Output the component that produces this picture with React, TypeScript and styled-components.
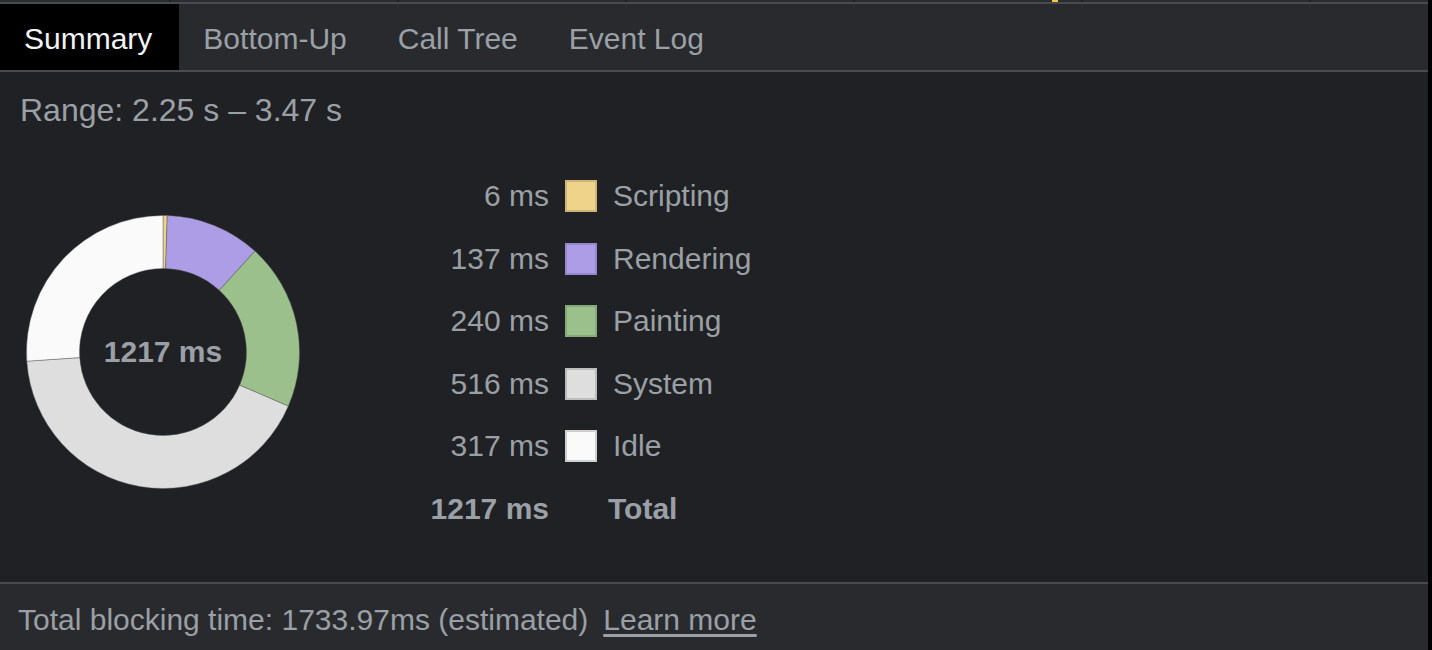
import React from "react"
import styled, { createGlobalStyle } from "styled-components"

const GlobalStyle = createGlobalStyle`
    html, body {
        margin: 0;
        padding: 0;
        background: #000;
    }
    body {
        font-family: "Liberation Sans", Arial, Helvetica, sans-serif;
    }
`

const Shell = styled.div`
    display: flex;
    width: 1432px;
    height: 650px;
    overflow: hidden;
    background: #000;
`

const Panel = styled.div`
    flex: 1;
    display: flex;
    flex-direction: column;
    background: #202124;
`

const Rail = styled.div`
    width: 4px;
    background: #000;
`

const Overview = styled.div`
    position: relative;
    height: 2px;
    background: repeating-linear-gradient(
        to right,
        #2b2c30 0px,
        #2b2c30 169px,
        #1d1e21 169px,
        #1d1e21 171px,
        #2b2c30 171px,
        #2b2c30 228px
    );
    border-bottom: 2px solid #4a4b4f;
`

const Marker = styled.span`
    position: absolute;
    left: 1052px;
    top: 0;
    width: 6px;
    height: 2px;
    background: #f7c54a;
`

const TabBar = styled.div`
    display: flex;
    height: 66px;
    background: #292a2d;
    border-bottom: 2px solid #4a4b4f;
`

const Tab = styled.div<{ $active?: boolean }>`
    display: flex;
    align-items: center;
    padding: 3px 27px 0 24px;
    font-size: 30px;
    color: ${p => p.$active ? "#f1f3f4" : "#9aa0a6"};
    background: ${p => p.$active ? "#000" : "transparent"};
`

const Content = styled.div`
    flex: 1;
    padding: 22px 20px 0 20px;
    border-bottom: 2px solid #4a4b4f;
`

const Range = styled.div`
    font-size: 32px;
    line-height: 32px;
    color: #9aa0a6;
`

const ChartRow = styled.div`
    display: flex;
    align-items: center;
    margin-top: 38px;
`

const DonutBox = styled.div`
    position: relative;
    width: 274px;
    height: 274px;
    margin-left: 6px;
    flex-shrink: 0;
`

const DonutLabel = styled.div`
    position: absolute;
    inset: 0;
    display: flex;
    align-items: center;
    justify-content: center;
    font-size: 30px;
    font-weight: bold;
    color: #9aa0a6;
`

const Legend = styled.div`
    display: grid;
    grid-template-columns: 140px 32px auto;
    grid-auto-rows: 62.5px;
    column-gap: 16px;
    align-items: center;
    margin: 1px 0 0 109px;
    font-size: 30px;
    color: #9aa0a6;
`

const Value = styled.div<{ $bold?: boolean }>`
    text-align: right;
    white-space: nowrap;
    font-weight: ${p => p.$bold ? "bold" : "normal"};
`

const Swatch = styled.div<{ $fill: string; $edge: string }>`
    width: 32px;
    height: 32px;
    box-sizing: border-box;
    background: ${p => p.$fill};
    border: 2px solid ${p => p.$edge};
`

const Label = styled.div<{ $bold?: boolean; $shift?: number }>`
    white-space: nowrap;
    font-weight: ${p => p.$bold ? "bold" : "normal"};
    margin-left: ${p => p.$shift ?? 0}px;
`

const Footer = styled.div`
    display: flex;
    align-items: center;
    gap: 15px;
    height: 66px;
    padding: 6px 0 0 18px;
    box-sizing: border-box;
    background: #292a2d;
    font-size: 30px;
    color: #9aa0a6;
`

const LearnMore = styled.a`
    color: #9aa0a6;
    text-decoration: underline;
    text-underline-offset: 4px;
    cursor: pointer;
`

interface Category {
    name: string,
    ms: number,
    fill: string,
    edge: string
}

const categories: Category[] = [
    { name: "Scripting", ms: 6, fill: "#efd38a", edge: "#cdb478" },
    { name: "Rendering", ms: 137, fill: "#ac9de6", edge: "#9487cc" },
    { name: "Painting", ms: 240, fill: "#9bc08c", edge: "#85a978" },
    { name: "System", ms: 516, fill: "#dedede", edge: "#bcbcbc" },
    { name: "Idle", ms: 317, fill: "#fafafa", edge: "#cfcfcf" },
]

const total = 1217

const point = (cx: number, cy: number, r: number, deg: number) => {
    const a = (deg - 90) * Math.PI / 180
    return [cx + r * Math.cos(a), cy + r * Math.sin(a)]
}

const arcPath = (start: number, end: number) => {
    const cx = 137, cy = 137, R = 136.5, r = 83.5
    const large = end - start > 180 ? 1 : 0
    const [x1, y1] = point(cx, cy, R, start)
    const [x2, y2] = point(cx, cy, R, end)
    const [x3, y3] = point(cx, cy, r, end)
    const [x4, y4] = point(cx, cy, r, start)
    return `M${x1} ${y1} A${R} ${R} 0 ${large} 1 ${x2} ${y2} L${x3} ${y3} A${r} ${r} 0 ${large} 0 ${x4} ${y4} Z`
}

const Donut: React.FC = () => {
    const sum = categories.reduce((s, c) => s + c.ms, 0)
    let angle = 0
    return (
        <DonutBox>
            <svg width="274" height="274" viewBox="0 0 274 274">
                {categories.map(c => {
                    const start = angle
                    const end = angle + c.ms / sum * 360
                    angle = end
                    return <path key={c.name} d={arcPath(start, end)} fill={c.fill} stroke="rgba(90,90,90,0.55)" strokeWidth="0.8" />
                })}
            </svg>
            <DonutLabel>{total} ms</DonutLabel>
        </DonutBox>
    )
}

export default function App() {
    return (
        <>
            <GlobalStyle />
            <Shell>
                <Panel>
                    <Overview><Marker /></Overview>
                    <TabBar>
                        <Tab $active>Summary</Tab>
                        <Tab>Bottom-Up</Tab>
                        <Tab>Call Tree</Tab>
                        <Tab>Event Log</Tab>
                    </TabBar>
                    <Content>
                        <Range>Range: 2.25 s – 3.47 s</Range>
                        <ChartRow>
                            <Donut />
                            <Legend>
                                {categories.map(c => (
                                    <React.Fragment key={c.name}>
                                        <Value>{c.ms} ms</Value>
                                        <Swatch $fill={c.fill} $edge={c.edge} />
                                        <Label>{c.name}</Label>
                                    </React.Fragment>
                                ))}
                                <Value $bold>{total} ms</Value>
                                <div />
                                <Label $bold $shift={-5}>Total</Label>
                            </Legend>
                        </ChartRow>
                    </Content>
                    <Footer>
                        <span>Total blocking time: 1733.97ms (estimated)</span>
                        <LearnMore>Learn more</LearnMore>
                    </Footer>
                </Panel>
                <Rail />
            </Shell>
        </>
    )
}
